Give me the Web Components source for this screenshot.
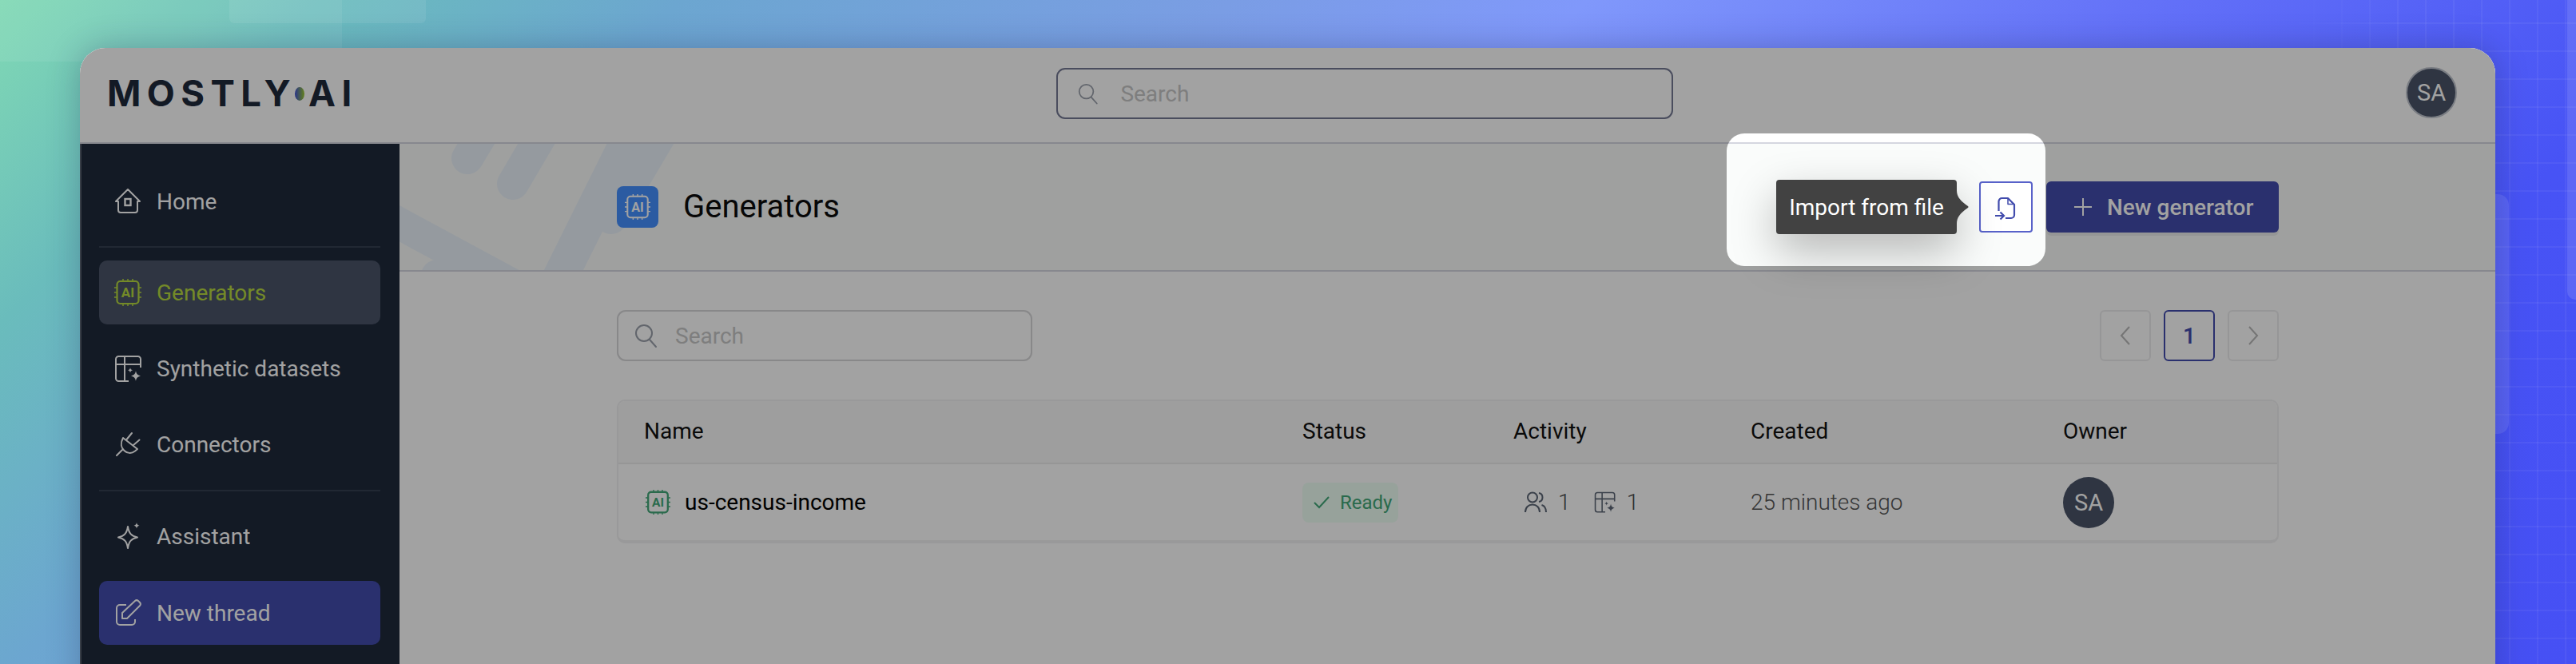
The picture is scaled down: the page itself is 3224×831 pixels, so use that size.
<!DOCTYPE html>
<html lang="en"><head><meta charset="utf-8"><title>Generators</title>
<style>
html,body{margin:0;height:100%;overflow:hidden}
body{font-family:Roboto,"Liberation Sans",sans-serif}
</style></head><body>
<app-desktop>
  <app-window>
    <top-bar></top-bar>
    <side-nav slot="side"></side-nav>
    <page-head slot="main"></page-head>
    <generator-list slot="main"></generator-list>
  </app-window>
</app-desktop>
<script>
const ICONS={
home:`<path d="M17 2 2 17h3v11a3 3 0 0 0 3 3h18a3 3 0 0 0 3-3V17h3Z" stroke-linejoin="round"/><rect x="13.500" y="14" width="7" height="8" stroke-width="2.400"/>`,
table:`<path d="M33 16V5.500A3.500 3.500 0 0 0 29.500 2H5.500A3.500 3.500 0 0 0 2 5.500v24A3.500 3.500 0 0 0 5.500 33H18M2 12h31M13 2v31"/><path d="M27 20c.7 4 2 5.400 6 6.500-4 1.100-5.300 2.500-6 6.500-.7-4-2-5.400-6-6.500 4-1.100 5.300-2.500 6-6.500Z" fill="currentColor" stroke="none"/><path d="M20 16c.3 2 1 2.700 3 3.300-2 .6-2.700 1.300-3 3.300-.3-2-1-2.700-3-3.300 2-.6 2.700-1.300 3-3.300Z" fill="currentColor" stroke="none"/>`,
plug:`<path d="M3 31l7-7M11 9 29 23l-3 2.500c-4.500 3.500-10 3-13.500-.5-4-3.500-5-9.500-1.500-16ZM15.500 11 22 3M24 18l7.500-6.500" stroke-linejoin="round" stroke-linecap="round"/>`,
spark:`<path d="M15 5c1.300 8.500 4.500 12 12 13.500-7.500 1.500-10.700 5-12 13.500-1.300-8.500-4.500-12-12-13.500C10.500 17 13.700 13.500 15 5Z" stroke-linejoin="round"/><path d="M26 0c.4 2.300 1.300 3.300 3.500 3.800-2.200.5-3.100 1.500-3.500 3.800-.4-2.300-1.300-3.300-3.500-3.800C24.700 3.300 25.600 2.300 26 0Z" fill="currentColor" stroke="none"/>`,
pen:`<path d="M15 8H7a4 4 0 0 0-4 4v17a4 4 0 0 0 4 4h15a4 4 0 0 0 4-4v-3" /><path d="M10 24V18L26 3a3 3 0 0 1 4 0l2 2a3 3 0 0 1 0 4L16 25H10Z" stroke-linejoin="round"/>`,
search:`<circle cx="12" cy="12" r="10"/><path d="M19 20l8 9" stroke-linecap="round"/>`,
plus:`<path d="M11 0v22M0 11h22"/>`,
file:`<path d="M5.500 17V5a4 4 0 0 1 4-4h7.500l8 8v13a4 4 0 0 1-4 4h-7" stroke-linejoin="round"/><path d="M17 1v7.500h8" stroke-linejoin="round" stroke-width="1.500"/><path d="M1 23h11M7.500 18.500 12 23l-4.500 4.500"/>`,
left:`<path d="M12 1 2 12l10 11"/>`,
right:`<path d="M2 1l10 11L2 23"/>`,
check:`<path d="M2 9l6 6L20 2"/>`,
users:`<circle cx="10" cy="7.500" r="6"/><path d="M1 26c0-6 4-9.500 9-9.500s9 3.500 9 9.500M18 2c3 .5 4.500 2.800 4.500 5.500S21 12.500 18 13M21.500 17c3.500 1 5.500 4.500 5.500 9"/>`
};
const SIZES={home:[34,34],table:[35,35],plug:[34,34],spark:[30,34],pen:[34,36],search:[30,30],plus:[22,22],file:[26,28],left:[14,24],right:[14,24],check:[22,17],users:[28,27]};
class XIcon extends HTMLElement{connectedCallback(){const n=this.getAttribute('name'),[w,h]=SIZES[n],s=+this.getAttribute('scale')||1;
 this.attachShadow({mode:'open'}).innerHTML=`<style>:host{display:inline-flex;flex:none;line-height:0}svg{display:block;overflow:visible}</style><svg width="${w*s}" height="${h*s}" viewBox="0 0 ${w} ${h}" fill="none" stroke="currentColor" stroke-width="${this.getAttribute('sw')||2}">${ICONS[n]}</svg>`;}}
customElements.define('x-icon',XIcon);

class AiChip extends HTMLElement{connectedCallback(){const s=+this.getAttribute('size')||34;
 this.attachShadow({mode:'open'}).innerHTML=`<style>:host{display:inline-flex;flex:none;line-height:0}svg{display:block}text{font:700 17px Roboto,"Liberation Sans",sans-serif;fill:currentColor}</style>
 <svg width="${s}" height="${s}" viewBox="0 0 34 34" fill="none" stroke="currentColor" stroke-width="${this.getAttribute('sw')||2.200}"><rect x="3.500" y="3" width="27" height="28" rx="4"/><path d="M11 0v3M17 0v3M23 0v3M11 31v3M17 31v3M23 31v3M0 11h3.500M0 17h3.500M0 23h3.500M30.500 11H34M30.500 17H34M30.500 23H34" stroke-width="1.500"/><text x="17" y="23" text-anchor="middle" stroke="none">AI</text></svg>`;}}
customElements.define('ai-chip',AiChip);

class AppDesktop extends HTMLElement{constructor(){super();this.attachShadow({mode:'open'}).innerHTML=`<style>
:host{display:block;position:relative;width:3224px;height:831px;overflow:hidden;box-sizing:border-box;padding:60px 101px 0 100px;
background:linear-gradient(135deg,#80d9b4 0%,#6abcbc 10%,#6ca6d0 21%,#7a9de4 38%,#8098fb 49%,#6472f8 66%,#4753f5 84%,#4650f4 100%)}
.d{position:absolute;pointer-events:none}
.a{left:0;top:0;width:428px;height:77px;background:rgba(255,255,255,.07)}
.b{left:287px;top:-10px;width:246px;height:39px;border-radius:6px;background:rgba(255,255,255,.08)}
.c{left:3213px;top:-10px;width:40px;height:385px;border-radius:10px;background:rgba(255,255,255,.12)}
.e{left:3100px;top:243px;width:40px;height:300px;border-radius:14px;background:rgba(255,255,255,.1)}
.g{left:2860px;top:0;width:364px;height:831px;background-image:linear-gradient(rgba(255,255,255,.05) 2px,transparent 2px),linear-gradient(90deg,rgba(255,255,255,.05) 2px,transparent 2px);background-size:35px 35px;background-position:0 28px,0 0;-webkit-mask-image:linear-gradient(90deg,transparent,#000 40%)}
.s{position:relative;display:block;height:100%}
</style><div class="d a"></div><div class="d b"></div><div class="d g"></div><div class="d c"></div><div class="d e"></div><slot class="s"></slot>`;}}
customElements.define('app-desktop',AppDesktop);

class AppWindow extends HTMLElement{constructor(){super();this.attachShadow({mode:'open'}).innerHTML=`<style>
:host{display:block;position:relative;height:830px;border-radius:32px 32px 0 0;background:#fff;box-shadow:0 0 40px rgba(20,30,70,.28);overflow:hidden}
.body{display:grid;grid-template-columns:400px 1fr;height:710px}
main{display:flex;flex-direction:column;min-width:0}
.scrim{position:absolute;left:2061px;top:107px;width:399px;height:166px;border-radius:22px;box-shadow:0 0 0 4000px rgba(0,0,0,.365);pointer-events:none}
</style><slot></slot><div class="body"><slot name="side"></slot><main><slot name="main"></slot></main></div><div class="scrim"></div>`;}}
customElements.define('app-window',AppWindow);

class BrandLogo extends HTMLElement{constructor(){super();this.attachShadow({mode:'open'}).innerHTML=`<style>
:host{display:inline-flex;align-items:center;font:700 45.500px/1 Inter,"Liberation Sans",sans-serif;color:#1e293b;letter-spacing:7.400px;white-space:nowrap}
i{display:inline-block;width:12px;height:17px;border-radius:50%;background:linear-gradient(90deg,#3f51d8,#9ccc2c);margin:0 5px 0 -2px}
</style>MOSTLY<i></i>AI`;}}
customElements.define('brand-logo',BrandLogo);

class SearchBox extends HTMLElement{constructor(){super();this.attachShadow({mode:'open'}).innerHTML=`<style>
:host{display:flex;align-items:center;box-sizing:border-box;height:64px;border:2px solid var(--b,#d6d6d8);border-radius:11px;padding-left:var(--pl,21px);gap:var(--g,21px);color:#9aa0ab;font:400 28px Roboto,"Liberation Sans",sans-serif}
span{color:#c7c7c7}
</style><x-icon name="search" scale="${this.getAttribute('iscale')||1}"></x-icon><span>Search</span>`;}}
customElements.define('search-box',SearchBox);

class UserBadge extends HTMLElement{constructor(){super();this.attachShadow({mode:'open'}).innerHTML=`<style>
:host{display:inline-flex;align-items:center;justify-content:center;width:64px;height:64px;box-sizing:border-box;border-radius:50%;background:#4a5468;color:#fff;font:400 29px Roboto,"Liberation Sans",sans-serif;flex:none}
:host([ring]){border:2px solid #bfc4cd}
</style>SA`;}}
customElements.define('user-badge',UserBadge);

class TopBar extends HTMLElement{constructor(){super();this.attachShadow({mode:'open'}).innerHTML=`<style>
:host{display:grid;grid-template-columns:1188px 772px 1fr;align-items:center;height:120px;box-sizing:border-box;padding:0 48px 2px 34px;border-bottom:2px solid #d5d7e0;background:#fff}
.r{justify-self:end}search-box{--b:#757a94;--pl:25px;--g:27px;margin-top:-2px}
user-badge{margin-top:-4px}
</style><brand-logo style="margin-top:-2px;justify-self:start"></brand-logo><search-box iscale=".88"></search-box><div class="r"><user-badge ring></user-badge></div>`;}}
customElements.define('top-bar',TopBar);

class NavItem extends HTMLElement{constructor(){super();this.attachShadow({mode:'open'}).innerHTML=`<style>
:host{display:flex;align-items:center;height:80px;box-sizing:border-box;border-radius:10px;padding:0 0 0 19px;gap:19px;color:#fff;font:400 28px Roboto,"Liberation Sans",sans-serif;--ibg:#1e293b}
:host([active]){background:#4a5468;color:#b7d93f;--ibg:#4a5468}
:host([cta]){background:#424cad;--ibg:#424cad}
.i{width:34px;display:flex;justify-content:center}
</style><span class="i"><slot name="i"></slot></span><slot></slot>`;}}
customElements.define('nav-item',NavItem);

class SideNav extends HTMLElement{constructor(){super();this.attachShadow({mode:'open'}).innerHTML=`<style>
:host{display:flex;flex-direction:column;padding:32px 24px 0 22px;background:#1e293b;box-sizing:border-box;height:710px;border-left:2px solid #57606f}
hr{border:0;height:2px;background:#353f51;margin:16px 0 16px;width:100%}
.sp{height:15px;flex:none}
nav-item{flex:none}
</style>
<nav-item><x-icon slot="i" name="home"></x-icon>Home</nav-item>
<hr>
<nav-item active><ai-chip slot="i"></ai-chip>Generators</nav-item>
<div class="sp"></div>
<nav-item><x-icon slot="i" name="table"></x-icon>Synthetic datasets</nav-item>
<div class="sp"></div>
<nav-item><x-icon slot="i" name="plug"></x-icon>Connectors</nav-item>
<hr style="margin:17px 0 16px">
<nav-item><x-icon slot="i" name="spark"></x-icon>Assistant</nav-item>
<div class="sp" style="height:16px"></div>
<nav-item cta><x-icon slot="i" name="pen"></x-icon>New thread</nav-item>`;}}
customElements.define('side-nav',SideNav);

class PageHead extends HTMLElement{constructor(){super();this.attachShadow({mode:'open'}).innerHTML=`<style>
:host{display:block;position:relative;height:160px;box-sizing:border-box;border-bottom:2px solid #d5d7e0;background:#fafcfb;overflow:visible;flex:none}
.deco{position:absolute;left:0;top:0;width:400px;height:158px;overflow:hidden}
.in{position:relative;display:flex;align-items:center;height:158px;margin:0 271px 0 272px;box-sizing:border-box}
.badge{width:52px;height:52px;border-radius:8px;background:#4590ff;color:#fff;display:flex;align-items:center;justify-content:center;flex:none;margin-right:31px}
h1{margin:0;font:400 40px Roboto,"Liberation Sans",sans-serif;color:#0b0b0b;flex:1;position:relative;top:-1px}
.imp{position:relative;box-sizing:border-box;width:67px;height:64px;border:2px solid #5862c9;border-radius:4px;background:#fff;color:#424cad;display:flex;align-items:center;justify-content:center;margin-right:17px}
.imp x-icon{margin:4px 3px 0 0}
.new{box-sizing:border-box;width:291px;height:64px;border-radius:6px;background:#424cad;color:#fff;display:flex;align-items:center;padding-left:35px;gap:19px;font:500 28px Roboto,"Liberation Sans",sans-serif;box-shadow:0 4px 0 rgba(0,0,0,.06)}
.tip{position:absolute;right:calc(100% + 30px);top:-4px;height:68px;width:226px;box-sizing:border-box;border-radius:4px;background:#424242;color:#fff;font:400 28px Roboto,"Liberation Sans",sans-serif;display:flex;align-items:center;justify-content:center;white-space:nowrap;box-shadow:0 22px 56px rgba(0,0,0,.28)}
.tip svg{position:absolute;left:100%;top:13px}
</style>
<svg class="deco" viewBox="0 0 400 158" fill="none" stroke="#ebf3fb" stroke-linecap="round" stroke-width="40"><path d="M85 18 109 -22"/><path d="M142 50 183 -20"/><path d="M197 175 289 -10" stroke-width="44"/><path d="M307 18 350 -50"/><path d="M265 93 336 -27"/><path d="M-20 89 200 208"/><path d="M47 165 80 190"/></svg>
<div class="in"><div class="badge"><ai-chip size="32" sw="2.200"></ai-chip></div><h1>Generators</h1>
<div class="imp"><x-icon name="file" sw="2.200"></x-icon><div class="tip">Import from file<svg width="15" height="42" viewBox="0 0 15 42" fill="#424242"><path d="M0 0C0 8 4 13 14 20q1 1 0 2C4 29 0 34 0 42Z"/></svg></div></div>
<div class="new"><x-icon name="plus" sw="2"></x-icon>New generator</div></div>`;}}
customElements.define('page-head',PageHead);

class GeneratorList extends HTMLElement{constructor(){super();this.attachShadow({mode:'open'}).innerHTML=`<style>
:host{display:block;padding:48px 271px 0 272px;background:#fff;flex:1;font:400 28px Roboto,"Liberation Sans",sans-serif;color:#111}
.bar{display:flex;align-items:center;justify-content:space-between;height:64px;margin-bottom:48px}
search-box{width:520px;--pl:20px;--g:21px}
.pg{display:flex;gap:16px}
.pg div{width:64px;height:64px;box-sizing:border-box;border:2px solid #ececee;border-radius:6px;display:flex;align-items:center;justify-content:center;color:#b8b8b8}
.pg .cur{border-color:#424cad;color:#424cad;font-weight:500;font-size:28px}
.t{border:2px solid #f1f1f2;border-bottom-width:4px;border-radius:10px;overflow:hidden;box-sizing:border-box;height:180px}
.r{display:grid;grid-template-columns:824px 264px 297px 391px 1fr;align-items:center;padding-left:32px}
.h{height:76px;background:#f9f9f9;border-bottom:2px solid #ededed;padding-bottom:1px;box-sizing:content-box}
.h span{position:relative;top:-1px}
.b{height:95px}
.n{display:flex;align-items:center;gap:18px;padding-left:2px}
.rd{display:inline-flex;align-items:center;height:50px;width:120px;box-sizing:border-box;padding-left:13px;gap:12px;border-radius:8px;background:#eefff5;color:#42a878;font-weight:400;font-size:24px}
.ac{display:flex;align-items:center;color:#5c6675;padding-left:14px}
.ac b{font-weight:300;margin-left:14px;margin-right:29px;color:#4a4a4a}
.c{color:#555;font-weight:300}
</style>
<div class="bar"><search-box></search-box><div class="pg"><div><x-icon name="left"></x-icon></div><div class="cur">1</div><div><x-icon name="right"></x-icon></div></div></div>
<div class="t"><div class="r h"><span>Name</span><span>Status</span><span>Activity</span><span>Created</span><span>Owner</span></div>
<div class="r b"><span class="n"><ai-chip size="31" sw="2.500" style="color:#42a878"></ai-chip><span style="color:#000">us-census-income</span></span><span><span class="rd"><x-icon name="check"></x-icon>Ready</span></span><span class="ac"><x-icon name="users"></x-icon><b>1</b><x-icon name="table" scale=".78"></x-icon><b>1</b></span><span class="c">25 minutes ago</span><span><user-badge></user-badge></span></div></div>`;}}
customElements.define('generator-list',GeneratorList);
</script>
</body></html>
